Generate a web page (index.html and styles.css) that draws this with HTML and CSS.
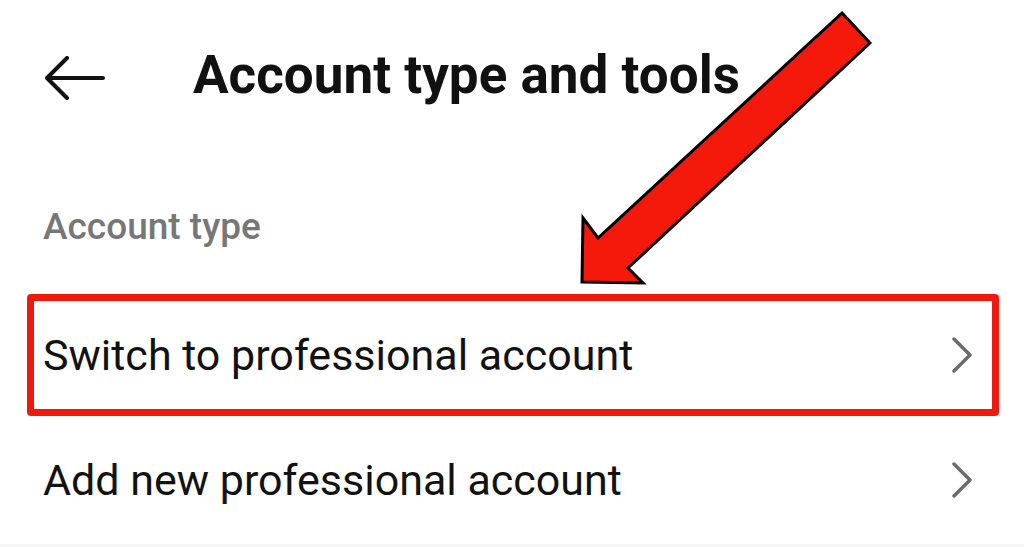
FILE: index.html
```html
<!DOCTYPE html>
<html lang="en">
<head>
<meta charset="utf-8">
<title>Account type and tools</title>
<link rel="stylesheet" href="styles.css">
</head>
<body>
<div class="page">
  <header class="header">
    <svg class="back" width="60" height="44" viewBox="0 0 60 44" aria-hidden="true">
      <path d="M2 22 H58 M22 2 L2 22 L22 42" fill="none" stroke="#111" stroke-width="4" stroke-linecap="round" stroke-linejoin="round"/>
    </svg>
    <h1 class="title">Account type and tools</h1>
  </header>

  <div class="section-label">Account type</div>

  <div class="list">
    <div class="row row-highlight">
      <span class="row-text">Switch to professional account</span>
      <svg class="chev" width="22" height="36" viewBox="0 0 22 36" aria-hidden="true">
        <path d="M3 2 L19 18 L3 34" fill="none" stroke="#6b6b6b" stroke-width="3.5" stroke-linecap="round" stroke-linejoin="round"/>
      </svg>
    </div>
    <div class="row">
      <span class="row-text">Add new professional account</span>
      <svg class="chev" width="22" height="36" viewBox="0 0 22 36" aria-hidden="true">
        <path d="M3 2 L19 18 L3 34" fill="none" stroke="#6b6b6b" stroke-width="3.5" stroke-linecap="round" stroke-linejoin="round"/>
      </svg>
    </div>
  </div>

  <div class="footer-strip"></div>

  <svg class="pointer" width="1024" height="547" viewBox="0 0 1024 547" aria-hidden="true">
    <polygon points="842,13 870,43 628,268 643,283 582,282 583,218 598,238" fill="#f5190c" stroke="#000" stroke-width="3" stroke-linejoin="miter"/>
  </svg>
</div>
</body>
</html>
```
FILE: styles.css
```css
html, body {
  margin: 0;
  padding: 0;
  background: #ffffff;
}

body {
  font-family: Roboto, "Noto Sans", Arial, sans-serif;
  color: #121212;
}

.page {
  position: relative;
  width: 1024px;
  height: 547px;
  overflow: hidden;
  display: flex;
  flex-direction: column;
}

.header {
  height: 150px;
  display: flex;
  align-items: center;
  padding-left: 45px;
  gap: 88px;
  flex-shrink: 0;
}

.back {
  display: block;
  margin-top: 6px;
}

.title {
  margin: 0;
  font-size: 53px;
  font-weight: 700;
  line-height: 1;
  color: #111111;
  letter-spacing: 0;
}

.section-label {
  margin-top: 58px;
  padding-left: 43px;
  font-size: 37px;
  font-weight: 500;
  line-height: 1;
  color: #777777;
}

.list {
  margin-top: 49px;
  margin-left: 27px;
  width: 972px;
  display: flex;
  flex-direction: column;
}

.row {
  height: 128px;
  box-sizing: border-box;
  border: 7px solid transparent;
  border-radius: 4px;
  display: flex;
  align-items: center;
  justify-content: space-between;
  padding: 0 19px 0 9px;
}

.row-highlight {
  height: 122px;
  border-color: #ee1a10;
}

.row-text {
  font-size: 43px;
  font-weight: 400;
  line-height: 1;
  color: #121212;
}

.chev {
  display: block;
  flex-shrink: 0;
}

.footer-strip {
  flex: 1;
  background: #f6f6f6;
}

.pointer {
  position: absolute;
  left: 0;
  top: 0;
  pointer-events: none;
}
```
